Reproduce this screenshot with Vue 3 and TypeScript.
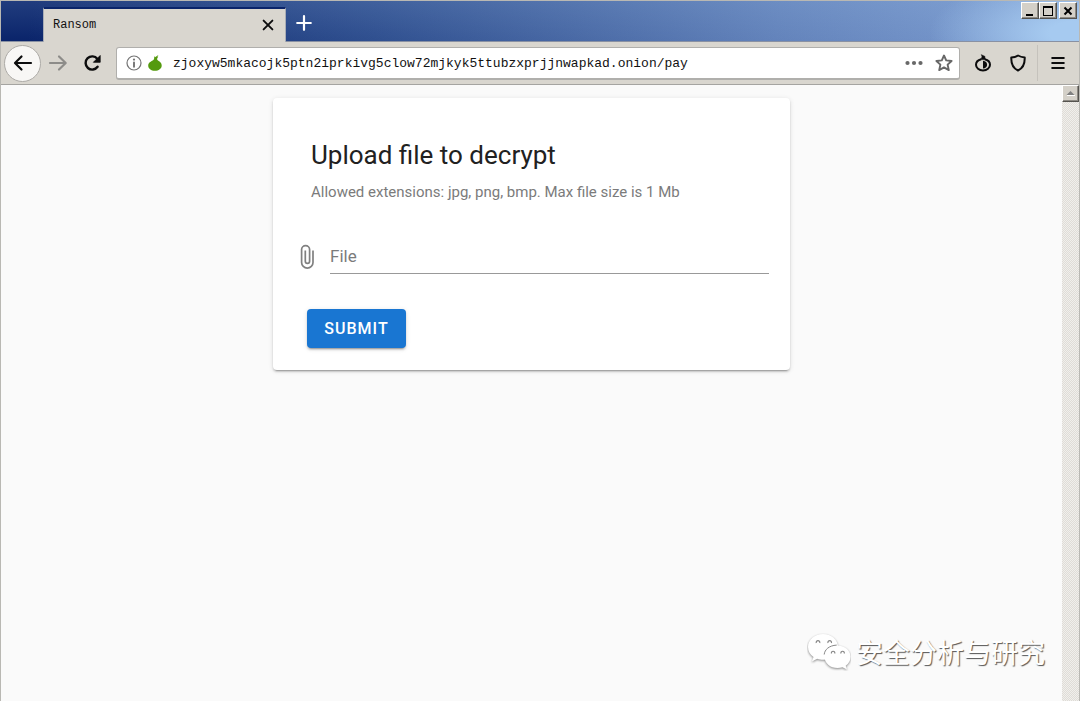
<script setup lang="ts">
import { ref } from 'vue'

const url = ref('zjoxyw5mkacojk5ptn2iprkivg5clow72mjkyk5ttubzxprjjnwapkad.onion/pay')
const fileName = ref('')

function onFile(event: Event): void {
  const input = event.target as HTMLInputElement
  fileName.value = input.files?.[0]?.name ?? ''
}
</script>

<template>
  <div class="window">
    <header class="titlebar">
      <div class="tab">
        <span class="tab-title">Ransom</span>
        <button class="tab-close" type="button" aria-label="Close tab">
          <svg width="12" height="12" viewBox="0 0 12 12"><path d="M1.600 1.600l8.800 8.800M10.400 1.600l-8.800 8.800" stroke="#0c0c0d" stroke-width="1.900" stroke-linecap="round" /></svg>
        </button>
      </div>
      <button class="new-tab" type="button" aria-label="New tab">
        <svg width="16" height="16" viewBox="0 0 16 16"><path d="M8 1.200v13.600M1.200 8h13.600" stroke="#fff" stroke-width="2.200" stroke-linecap="round" /></svg>
      </button>
      <div class="controls">
        <button type="button" aria-label="Minimize">
          <svg width="14" height="12" viewBox="0 0 14 12"><path d="M3 9h7v2H3z" /></svg>
        </button>
        <button type="button" aria-label="Maximize">
          <svg width="14" height="12" viewBox="0 0 14 12"><path d="M2 1h10v10H2zM3 3v7h8V3z" fill-rule="evenodd" /></svg>
        </button>
        <button class="close" type="button" aria-label="Close">
          <svg width="14" height="12" viewBox="0 0 14 12"><path d="M3.500 2.500l7 7M10.500 2.500l-7 7" stroke="#000" stroke-width="2" /></svg>
        </button>
      </div>
    </header>

    <nav class="toolbar">
      <button class="back" type="button" aria-label="Back">
        <svg width="20" height="18" viewBox="0 0 20 18"><path d="M18 9H2.500M8.500 2.500L2 9l6.500 6.500" fill="none" stroke="#0c0c0d" stroke-width="2.200" stroke-linecap="round" stroke-linejoin="round" /></svg>
      </button>
      <button class="tool forward" type="button" aria-label="Forward">
        <svg width="20" height="18" viewBox="0 0 20 18"><path d="M2 9h15.500M11 2.500L17.700 9 11 15.500" fill="none" stroke="#8d8c89" stroke-width="2.200" stroke-linecap="round" stroke-linejoin="round" /></svg>
      </button>
      <button class="tool reload" type="button" aria-label="Reload">
        <svg width="18" height="18" viewBox="0 0 18 18"><path d="M13.600 12.800A6.600 6.600 0 1 1 13.400 4.900" fill="none" stroke="#0c0c0d" stroke-width="2.400" stroke-linecap="round" /><path d="M16.200 1.500v6.800H9.400z" fill="#0c0c0d" stroke="#0c0c0d" stroke-width=".8" stroke-linejoin="round" /></svg>
      </button>
      <div class="urlbar">
        <svg class="info" width="16" height="16" viewBox="0 0 16 16"><circle cx="8" cy="8" r="7" fill="none" stroke="#737373" stroke-width="1.200" /><circle cx="8" cy="4.600" r="1.100" fill="#737373" /><path d="M8 7.500v4.200" stroke="#737373" stroke-width="1.900" stroke-linecap="round" /></svg>
        <svg class="onion" width="14" height="16" viewBox="0 0 14 16"><path d="M5.800.8L7 2.300 10.400 0 9.400 2l.9-.2C9.300 2.900 9 3.700 9.200 4.600c.3 1.300 4.500 2 4.500 5.900 0 3.200-3 5.300-6.800 5.300S.2 13.700.2 10.500c0-3.800 4.800-4.500 5.700-6.300.6-1.200.3-2.300-.1-3.400z" fill="#549a0e" /></svg>
        <input v-model="url" class="url" type="text" aria-label="Address" spellcheck="false">
        <button type="button" aria-label="Page actions">
          <svg width="18" height="6" viewBox="0 0 18 6" fill="#686868"><circle cx="2.500" cy="3" r="2.100" /><circle cx="9" cy="3" r="2.100" /><circle cx="15.500" cy="3" r="2.100" /></svg>
        </button>
        <button type="button" aria-label="Bookmark this page">
          <svg width="18" height="18" viewBox="0 0 18 18"><path d="M9 1.500l2.200 4.900 5.400.6-4 3.600 1.200 5.500L9 13.400l-4.800 2.700 1.200-5.500-4-3.600 5.400-.6z" fill="none" stroke="#686868" stroke-width="1.900" stroke-linejoin="round" /></svg>
        </button>
      </div>
      <button class="tool" type="button" aria-label="Tor circuit">
        <svg width="18" height="18" viewBox="0 0 18 18"><path d="M7.200 5.300C3.900 6.100 2 8 2 10.700 2 14 5 16.400 9 16.400s7-2.400 7-5.700c0-2.700-1.900-4.600-5.200-5.400" fill="none" stroke="#0c0c0d" stroke-width="2" /><path d="M9 6.800c2.700.3 4.100 1.800 4.100 3.900S11.700 14.200 9 14.500z" fill="#0c0c0d" /><path d="M7.300.7C8.500 2.200 8.300 3.700 6.300 5.600h5.400C10.800 4.800 10.900 3.500 11 2.500z" fill="#0c0c0d" stroke="#0c0c0d" stroke-width=".6" stroke-linejoin="round" /></svg>
      </button>
      <button class="tool" type="button" aria-label="Security level">
        <svg width="18" height="18" viewBox="0 0 18 18"><path d="M9 1.500c2 1.200 4.300 1.700 6.700 1.900.3 6.500-1.500 10.800-6.700 13.100C3.800 14.200 2 9.900 2.300 3.400 4.700 3.200 7 2.700 9 1.500z" fill="none" stroke="#0c0c0d" stroke-width="2" stroke-linejoin="round" /></svg>
      </button>
      <span class="divider"></span>
      <button class="tool menu" type="button" aria-label="Open menu">
        <svg width="14" height="14" viewBox="0 0 14 14"><path d="M1.200 2h11.600M1.200 7h11.600M1.200 12h11.600" stroke="#0c0c0d" stroke-width="2" stroke-linecap="round" /></svg>
      </button>
    </nav>

    <div class="viewport">
      <main class="page">
        <form class="card" @submit.prevent>
          <h1>Upload file to decrypt</h1>
          <p>Allowed extensions: jpg, png, bmp. Max file size is 1 Mb</p>
          <div class="field">
            <svg width="16" height="26" viewBox="0 0 16 26"><path d="M14 6.500v11.900a5.700 5.700 0 0 1-11.400 0V5.600a4 4 0 0 1 8 0v11.700a2.100 2.100 0 0 1-4.300 0V6.500" fill="none" stroke="#808080" stroke-width="1.700" /></svg>
            <label class="file">
              <span>{{ fileName || 'File' }}</span>
              <input type="file" accept=".jpg,.png,.bmp" @change="onFile">
            </label>
          </div>
          <button class="submit" type="submit">SUBMIT</button>
        </form>
        <div class="watermark">
          <svg width="44" height="38" viewBox="0 0 44 38">
            <g class="bubbles" fill="#fff">
              <path d="M16 1C7.700 1 1 6.800 1 14c0 4.100 2.100 7.600 5.500 10l-1.600 4.500 5.300-2.700c2 .7 3.800 1 6 1 8.200 0 14.800-5.700 14.800-12.800S24.300 1 16 1z" />
              <path d="M30.500 12.500c-7.300 0-13 5-13 11.300s5.700 11.300 13 11.300c1.800 0 3.500-.3 5-.8l4.500 2.300-1.300-3.900c3.100-2.100 4.900-5.200 4.900-8.900 0-6.300-5.800-11.300-13.100-11.300z" />
            </g>
            <path d="M9.300 10a1.800 1.800 0 1 1 3.400 0M21 10a1.800 1.800 0 1 1 3.400 0M24.500 20.500a1.700 1.700 0 1 1 3.200 0M34 20.500a1.700 1.700 0 1 1 3.200 0" fill="none" stroke="#888" stroke-width="1.200" />
            <path d="M17.200 21.500c.4-4.800 4.800-9 12.500-9.400" fill="none" stroke="#888" />
          </svg>
          <span>安全分析与研究</span>
        </div>
      </main>
      <div class="scrollbar">
        <button type="button" aria-label="Scroll up">
          <svg width="9" height="5" viewBox="0 0 9 5"><path d="M4.500 0L8.500 4H.5z" fill="#808080" /><path d="M1 4.500h8" stroke="#fff" /></svg>
        </button>
      </div>
    </div>
  </div>
</template>

<style>
body {
  margin: 0;
}
</style>

<style scoped>
* {
  box-sizing: border-box;
}

button {
  display: flex;
  align-items: center;
  justify-content: center;
  flex: none;
  padding: 0;
  border: 0;
  background: transparent;
  font: inherit;
}

svg {
  display: block;
  flex: none;
}

.window {
  display: flex;
  flex-direction: column;
  min-height: 100vh;
  border: 1px solid #b9b8b3;
  border-bottom: 0;
  background: #d9d6cf;
  font-family: Roboto, "Liberation Sans", sans-serif;
}

.titlebar {
  display: flex;
  align-items: flex-end;
  height: 41px;
  padding-left: 42px;
  border-bottom: 1px solid #8991a3;
  background:
    radial-gradient(ellipse 150px 60px at 100% 80%, #a6caf0 20%, rgba(166, 202, 240, 0)),
    linear-gradient(to bottom, rgba(166, 202, 240, .15), rgba(166, 202, 240, 0)),
    linear-gradient(100deg, #0a246a 3%, #2f4f8f 35%, #6383bb 72%, #7f9fd2);
}

.tab {
  display: flex;
  align-items: center;
  justify-content: space-between;
  width: 243px;
  height: 35px;
  margin-bottom: -1px;
  padding: 0 5px 2px 9px;
  border: 1px solid #a9adb5;
  border-top: 2px solid #0a246a;
  border-bottom: 0;
  background: #d9d6cf;
}

.tab-title {
  color: #111;
  font: 12px/16px "Liberation Mono", monospace;
}

.tab-close {
  width: 24px;
  height: 24px;
}

.new-tab {
  width: 36px;
  height: 36px;
}

.controls {
  display: flex;
  align-self: flex-start;
  margin: 1px 2px 0 auto;
}

.controls button,
.scrollbar button {
  width: 18px;
  height: 17px;
  border: 1px solid;
  border-color: #fff #55534f #55534f #fff;
  background: #d4d0c8;
  box-shadow: inset -1px -1px #8d8a84;
}

.controls .close {
  margin-left: 2px;
}

.toolbar {
  display: flex;
  align-items: center;
  height: 43px;
  padding: 0 4px 0 3px;
  border-bottom: 1px solid #a5a4a1;
}

.back {
  width: 37px;
  height: 37px;
  border: 1px solid #adaba7;
  border-radius: 50%;
  background: #f8f7f5;
}

.tool {
  width: 35px;
  height: 36px;
}

.forward {
  width: 34px;
}

.urlbar {
  display: flex;
  flex: 1;
  align-items: center;
  min-width: 0;
  height: 33px;
  margin: 0 5px 0 6px;
  padding: 0 5px 0 9px;
  border: 1px solid #b0afac;
  border-bottom-width: 2px;
  border-radius: 3px;
  background: #fff;
}

.onion {
  margin-left: 6px;
}

.url {
  flex: 1;
  min-width: 0;
  height: 26px;
  margin-left: 11px;
  padding: 2px 0 0;
  border: 0;
  outline: 0;
  background: transparent;
  color: #111;
  font: 13px/24px "Liberation Mono", monospace;
}

.urlbar button {
  width: 30px;
  height: 28px;
}

.urlbar button:last-child {
  width: 20px;
  margin-left: 5px;
}

.divider {
  width: 1px;
  height: 36px;
  margin: 0 2px;
  background: #c5c2bc;
}

.viewport {
  display: flex;
  flex: 1;
}

.page {
  position: relative;
  flex: 1;
  padding: 13px 16px;
  background: #fafafa;
}

.card {
  max-width: 517px;
  margin: 0 auto;
  padding: 40px 21px 22px 26px;
  border-radius: 4px;
  background: #fff;
  box-shadow: 0 3px 1px -2px rgba(0, 0, 0, .2), 0 2px 2px rgba(0, 0, 0, .14), 0 1px 5px rgba(0, 0, 0, .12);
}

h1 {
  margin: 0 0 6px 12px;
  color: #212121;
  font-size: 26px;
  font-weight: 400;
  line-height: 34px;
}

p {
  margin: 0 0 0 12px;
  color: #7b7b7b;
  font-size: 15px;
  line-height: 28px;
}

.field {
  display: flex;
  align-items: center;
  gap: 15px;
  margin-top: 33px;
}

.file {
  position: relative;
  flex: 1;
  height: 35px;
  border-bottom: 1px solid #999;
  color: #7b7b7b;
  font-size: 17px;
  line-height: 34px;
}

.file input {
  position: absolute;
  inset: 0;
  width: 100%;
  opacity: 0;
}

.submit {
  width: 99px;
  height: 39px;
  margin: 35px 0 0 8px;
  border-radius: 4px;
  background: #1976d2;
  box-shadow: 0 3px 1px -2px rgba(0, 0, 0, .2), 0 2px 2px rgba(0, 0, 0, .14), 0 1px 5px rgba(0, 0, 0, .12);
  color: #fff;
  font-size: 16px;
  font-weight: 500;
  letter-spacing: 1px;
}

.watermark {
  position: absolute;
  right: 17px;
  bottom: 30px;
  display: flex;
  align-items: center;
  gap: 5px;
  color: #fff;
  font: 27px/38px "Noto Sans CJK SC", sans-serif;
  text-shadow: 1px 1px 1px #555;
}

.bubbles {
  filter: drop-shadow(0 1px 1px #888);
}

.scrollbar {
  width: 17px;
  background: repeating-conic-gradient(#f0efec 0 25%, #dfdcd7 0 50%) 0 0 / 2px 2px;
}

.scrollbar button {
  width: 17px;
}
</style>
